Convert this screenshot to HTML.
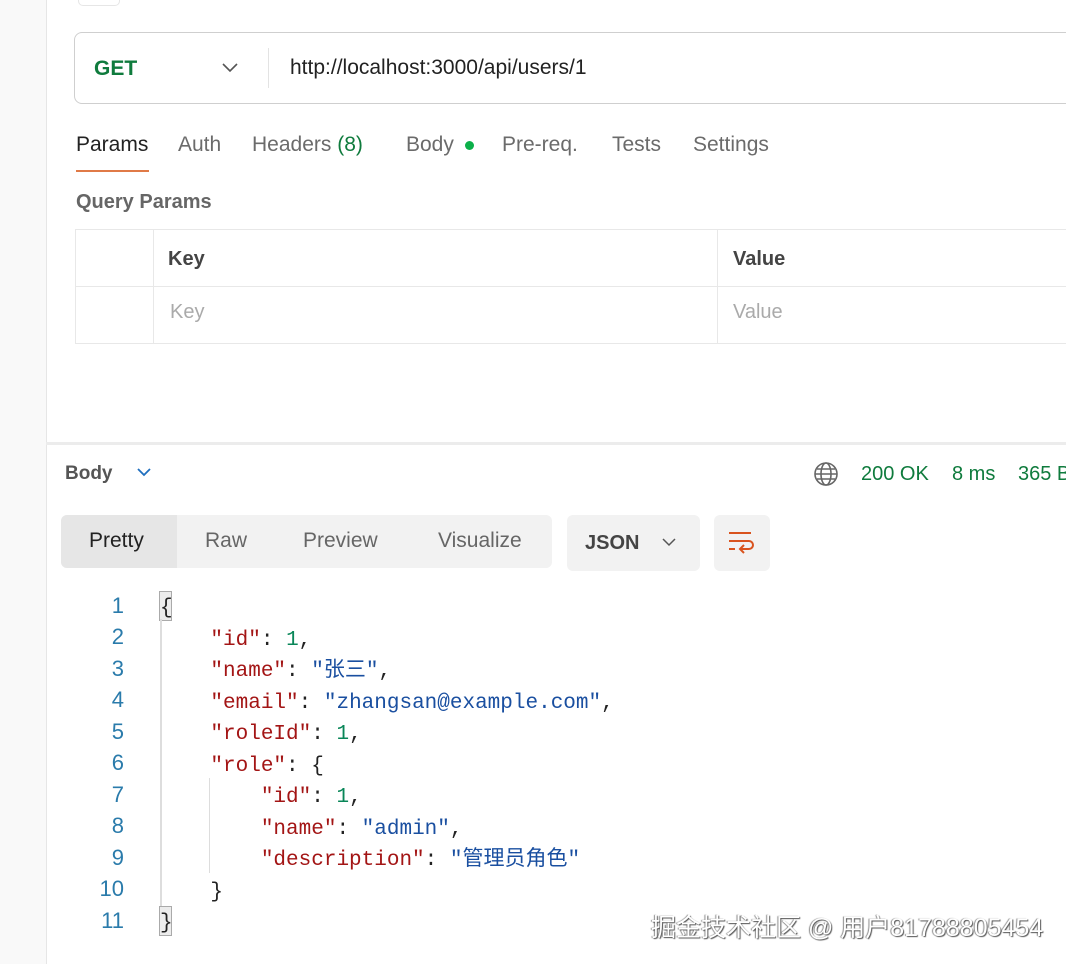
<!DOCTYPE html>
<html><head><meta charset="utf-8"><style>
body{margin:0;width:1066px;height:964px;overflow:hidden;background:#fff;font-family:"Liberation Sans","Noto Sans CJK SC",sans-serif;position:relative}
.a{position:absolute;white-space:nowrap}
.tab{position:absolute;top:133px;font-size:21px;color:#6b6b6b}
.mono{font-family:"Liberation Mono","Noto Sans CJK SC",monospace;font-size:21px}
.ln{position:absolute;left:80px;width:44px;text-align:right;color:#2a7bab;font-family:"Liberation Sans",sans-serif;font-size:22px}
.code{position:absolute;left:160px;color:#222}
.k{color:#a31515}.s{color:#1a4fa0}.n{color:#098658}
</style></head><body>
<div class="a" style="left:0;top:0;width:46px;height:964px;background:#f9f9f9;border-right:1px solid #e6e6e6"></div>
<div class="a" style="left:78px;top:-8px;width:40px;height:12px;border:1px solid #e6e6e6;border-radius:5px"></div>
<div class="a" style="left:74px;top:32px;width:1010px;height:70px;border:1px solid #cfcfcf;border-radius:8px"></div>
<div class="a" style="left:94px;top:57px;font-size:21px;font-weight:bold;color:#0f7b3d">GET</div>
<svg class="a" style="left:221px;top:62px" width="18" height="12"><path d="M2 2l7 7 7-7" fill="none" stroke="#555" stroke-width="1.6"/></svg>
<div class="a" style="left:268px;top:48px;width:1px;height:40px;background:#e3e3e3"></div>
<div class="a" style="left:290px;top:56px;font-size:21px;color:#222">http://localhost:3000/api/users/1</div>
<div class="tab" style="left:76px;color:#222">Params</div>
<div class="tab" style="left:178px">Auth</div>
<div class="tab" style="left:252px">Headers <span style="color:#0f7b3d">(8)</span></div>
<div class="tab" style="left:406px">Body</div>
<div class="a" style="left:465px;top:141px;width:9px;height:9px;border-radius:50%;background:#0cb04a"></div>
<div class="tab" style="left:502px">Pre-req.</div>
<div class="tab" style="left:612px">Tests</div>
<div class="tab" style="left:693px">Settings</div>
<div class="a" style="left:76px;top:170px;width:73px;height:2px;background:#e07a47"></div>
<div class="a" style="left:76px;top:191px;font-size:20px;font-weight:bold;color:#666">Query Params</div>
<div class="a" style="left:75px;top:229px;width:1000px;height:113px;border:1px solid #e8e8e8"></div>
<div class="a" style="left:75px;top:286px;width:1000px;height:1px;background:#e8e8e8"></div>
<div class="a" style="left:153px;top:229px;width:1px;height:114px;background:#e8e8e8"></div>
<div class="a" style="left:717px;top:229px;width:1px;height:114px;background:#e8e8e8"></div>
<div class="a" style="left:168px;top:248px;font-size:20px;font-weight:bold;color:#444">Key</div>
<div class="a" style="left:733px;top:248px;font-size:20px;font-weight:bold;color:#444">Value</div>
<div class="a" style="left:170px;top:301px;font-size:20px;color:#aaa">Key</div>
<div class="a" style="left:733px;top:301px;font-size:20px;color:#aaa">Value</div>
<div class="a" style="left:46px;top:442px;width:1020px;height:3px;background:#ececec"></div>
<div class="a" style="left:65px;top:463px;font-size:19px;font-weight:bold;color:#555">Body</div>
<svg class="a" style="left:136px;top:467px" width="16" height="11"><path d="M2 2l6 6 6-6" fill="none" stroke="#1f6fbf" stroke-width="1.8"/></svg>
<svg class="a" style="left:813px;top:461px" width="26" height="26" fill="none" stroke="#666" stroke-width="1.6"><circle cx="13" cy="13" r="11"/><ellipse cx="13" cy="13" rx="5" ry="11"/><path d="M2 13h22M4 8h18M4 18h18"/></svg>
<div class="a" style="left:861px;top:463px;font-size:20px;color:#0f7b3d">200 OK</div>
<div class="a" style="left:952px;top:463px;font-size:20px;color:#0f7b3d">8 ms</div>
<div class="a" style="left:1018px;top:463px;font-size:20px;color:#0f7b3d">365 B</div>
<div class="a" style="left:61px;top:515px;width:491px;height:53px;background:#f2f2f2;border-radius:6px"></div>
<div class="a" style="left:61px;top:515px;width:116px;height:53px;background:#e6e6e6;border-radius:6px 0 0 6px"></div>
<div class="a" style="left:89px;top:529px;font-size:21px;color:#222">Pretty</div>
<div class="a" style="left:205px;top:529px;font-size:21px;color:#666">Raw</div>
<div class="a" style="left:303px;top:529px;font-size:21px;color:#666">Preview</div>
<div class="a" style="left:438px;top:529px;font-size:21px;color:#666">Visualize</div>
<div class="a" style="left:567px;top:515px;width:133px;height:56px;background:#f2f2f2;border-radius:6px"></div>
<div class="a" style="left:585px;top:532px;font-size:20px;font-weight:bold;color:#444">JSON</div>
<svg class="a" style="left:661px;top:537px" width="16" height="11"><path d="M2 2l6 6 6-6" fill="none" stroke="#555" stroke-width="1.5"/></svg>
<div class="a" style="left:714px;top:515px;width:56px;height:56px;background:#f2f2f2;border-radius:6px"></div>
<svg class="a" style="left:726px;top:529px" width="30" height="28" fill="none" stroke="#d9531e" stroke-width="2"><path d="M3 4h22M3 12h20a4 4 0 0 1 0 8h-8M18 16l-4 4 4 4M3 20h6"/></svg>
<div class="a" style="left:159px;top:591px;width:11px;height:28px;background:#ececec;border:1px solid #aaa"></div>
<div class="a" style="left:159px;top:906px;width:11px;height:28px;background:#ececec;border:1px solid #aaa"></div>
<div class="a" style="left:160px;top:619px;width:2px;height:287px;background:#ddd"></div>
<div class="a" style="left:209px;top:778px;width:1px;height:95px;background:#ddd"></div>
<div class="ln" style="top:593px">1</div><div class="ln" style="top:624px">2</div><div class="ln" style="top:656px">3</div><div class="ln" style="top:687px">4</div><div class="ln" style="top:719px">5</div><div class="ln" style="top:750px">6</div><div class="ln" style="top:782px">7</div><div class="ln" style="top:813px">8</div><div class="ln" style="top:845px">9</div><div class="ln" style="top:876px">10</div><div class="ln" style="top:908px">11</div>
<pre class="code mono" style="top:593px;margin:0;line-height:31.5px">{
    <span class="k">"id"</span>: <span class="n">1</span>,
    <span class="k">"name"</span>: <span class="s">"张三"</span>,
    <span class="k">"email"</span>: <span class="s">"zhangsan@example.com"</span>,
    <span class="k">"roleId"</span>: <span class="n">1</span>,
    <span class="k">"role"</span>: {
        <span class="k">"id"</span>: <span class="n">1</span>,
        <span class="k">"name"</span>: <span class="s">"admin"</span>,
        <span class="k">"description"</span>: <span class="s">"管理员角色"</span>
    }
}</pre>
<div class="a" style="left:651px;top:908px;font-size:25px;color:#fff;text-shadow:1px 1px 1px #555,-1px 0 1px #888">掘金技术社区 @ 用户81788805454</div>
</body></html>
